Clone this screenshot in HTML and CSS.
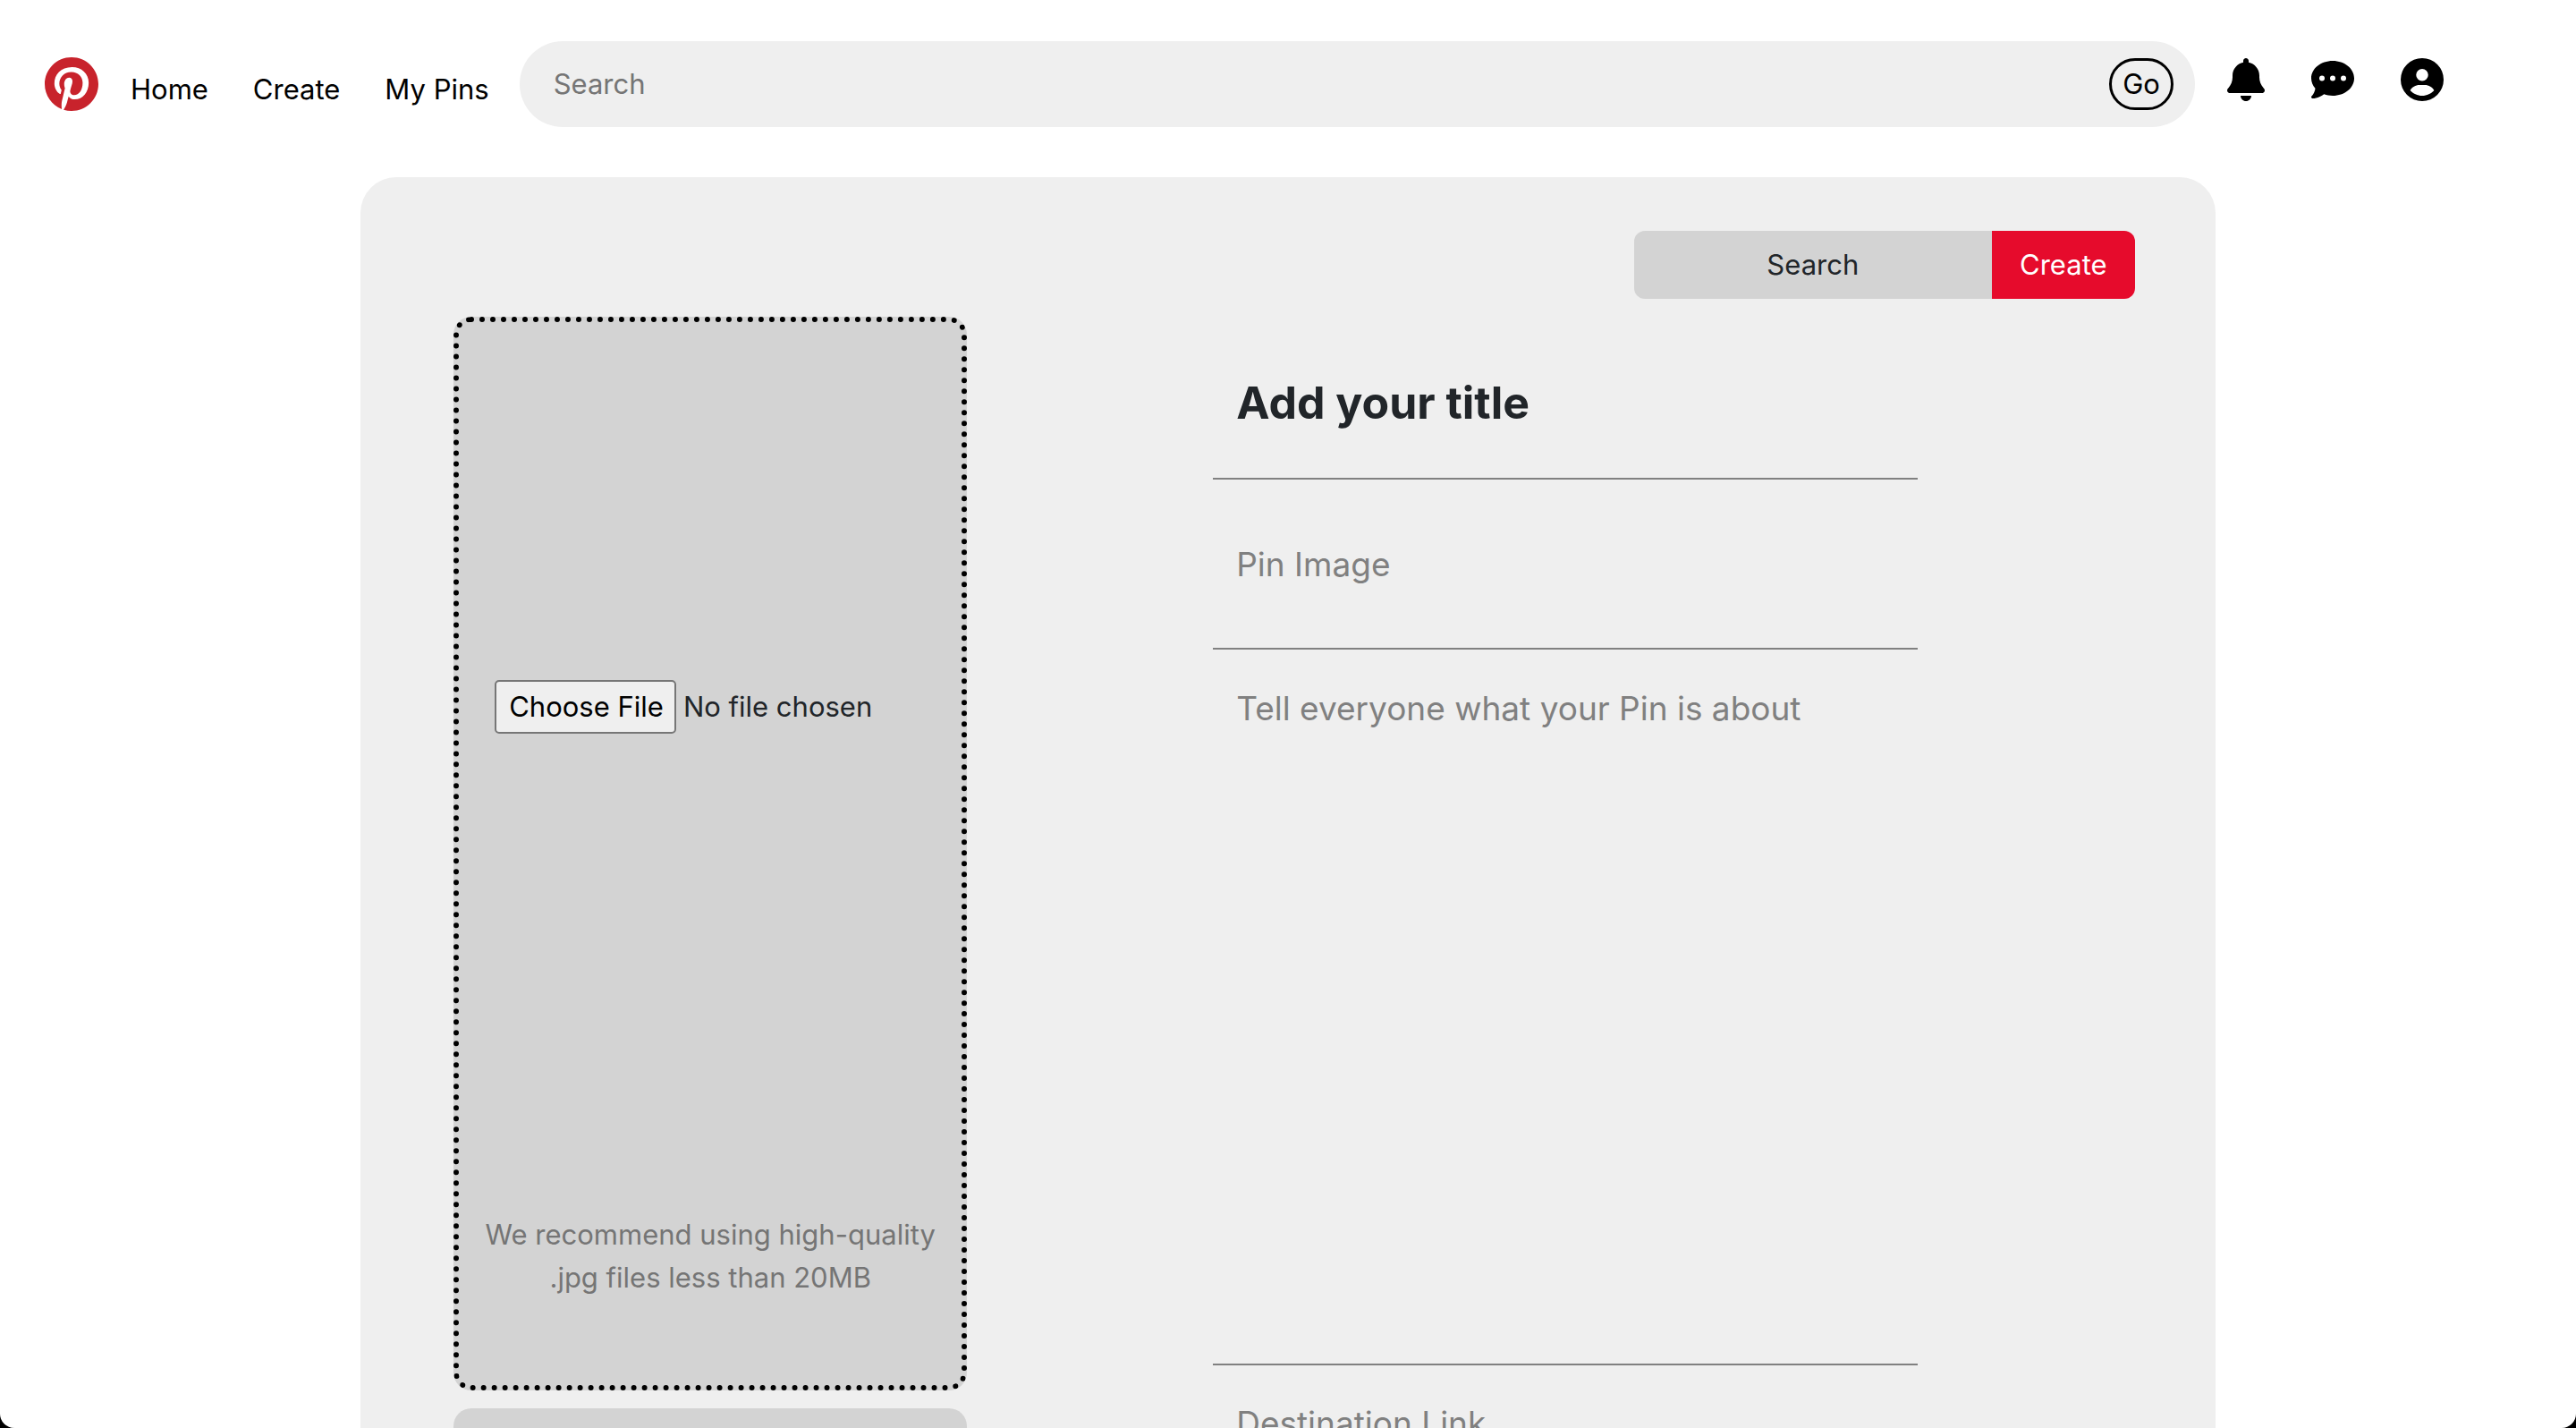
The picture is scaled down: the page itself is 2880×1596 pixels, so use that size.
FILE: index.html
```html
<!DOCTYPE html>
<html lang="en">
<head>
<meta charset="utf-8">
<meta name="viewport" content="width=device-width, initial-scale=1">
<title>Create a Pin</title>
<link rel="stylesheet" href="styles.css">
</head>
<body>
<div class="window">
  <header class="navbar">
    <a class="logo" href="#" aria-label="Pinterest">
      <svg viewBox="0 8 496 496" aria-hidden="true"><path d="M496 256c0 137-111 248-248 248-25.600 0-50.200-3.900-73.400-11.100 10.100-16.500 25.200-43.500 30.800-65 3-11.600 15.400-59 15.400-59 8.100 15.400 31.700 28.500 56.800 28.500 74.800 0 128.700-68.800 128.700-154.300 0-81.900-66.900-143.200-152.900-143.200-107 0-163.900 71.800-163.900 150.100 0 36.400 19.400 81.700 50.300 96.100 4.700 2.200 7.200 1.200 8.300-3.300.8-3.400 5-20.300 6.900-28.100.6-2.500.3-4.700-1.700-7.100-10.100-12.500-18.300-35.300-18.300-56.600 0-54.700 41.400-107.600 112-107.600 60.900 0 103.600 41.500 103.600 100.900 0 67.100-33.900 113.600-78 113.600-24.300 0-42.600-20.100-36.700-44.800 7-29.500 20.500-61.300 20.500-82.600 0-19-10.200-34.900-31.400-34.900-24.900 0-44.900 25.700-44.900 60.200 0 22 7.400 36.800 7.400 36.800s-24.500 103.800-29 123.200c-5 21.400-3 51.600-.9 71.200C65.400 450.900 0 361.100 0 256 0 119 111 8 248 8s248 111 248 248z"/></svg>
    </a>
    <nav class="links">
      <a href="#">Home</a>
      <a href="#">Create</a>
      <a href="#">My Pins</a>
    </nav>
    <form class="search" role="search">
      <input class="search-input" type="text" placeholder="Search" aria-label="Search">
      <button class="go" type="button">Go</button>
    </form>
    <div class="actions">
      <button class="icon" type="button" aria-label="Notifications"><svg viewBox="0 0 448 512" aria-hidden="true"><path d="M224 0c-17.700 0-32 14.300-32 32V51.200C119 66 64 130.600 64 208v18.800c0 47-17.300 92.400-48.500 127.600l-7.400 8.300c-8.400 9.400-10.400 22.900-5.300 34.400S19.400 416 32 416H416c12.600 0 24-7.400 29.200-18.900s3.100-25-5.300-34.400l-7.400-8.300C401.300 319.200 384 273.900 384 226.800V208c0-77.400-55-142-128-156.800V32c0-17.700-14.300-32-32-32zm45.300 493.300c12-12 18.700-28.300 18.700-45.300H224 160c0 17 6.700 33.300 18.700 45.300s28.300 18.700 45.300 18.700s33.300-6.700 45.300-18.700z"/></svg></button>
      <button class="icon" type="button" aria-label="Messages"><svg viewBox="0 0 512 512" aria-hidden="true"><path d="M256 448c141.400 0 256-93.100 256-208S397.400 32 256 32S0 125.100 0 240c0 45.100 17.700 86.800 47.700 120.900c-1.900 24.500-11.400 46.300-21.400 62.900c-5.500 9.200-11.100 16.600-15.200 21.600c-2.100 2.500-3.700 4.400-4.900 5.700c-.6 .6-1 1.100-1.300 1.400l-.3 .3c-4.600 4.600-5.900 11.400-3.400 17.400c2.500 6 8.300 9.900 14.800 9.900c28.700 0 57.600-8.900 81.600-19.300c22.900-10 42.400-21.900 54.300-30.600c31.800 11.500 67 17.900 104.100 17.900zM128 208a32 32 0 1 1 0 64 32 32 0 1 1 0-64zm128 0a32 32 0 1 1 0 64 32 32 0 1 1 0-64zm96 32a32 32 0 1 1 64 0 32 32 0 1 1 -64 0z"/></svg></button>
      <button class="icon" type="button" aria-label="Account"><svg viewBox="0 0 512 512" aria-hidden="true"><path d="M399 384.200C376.900 345.800 335.400 320 288 320H224c-47.400 0-88.900 25.800-111 64.200c35.200 39.200 86.200 63.800 143 63.800s107.800-24.700 143-63.800zM0 256a256 256 0 1 1 512 0A256 256 0 1 1 0 256zm256 16a72 72 0 1 0 0-144 72 72 0 1 0 0 144z"/></svg></button>
    </div>
  </header>

  <main class="card">
    <div class="toolbar">
      <button class="board" type="button">Search</button>
      <button class="create" type="button">Create</button>
    </div>
    <form class="pin-form">
      <div class="media">
        <div class="dropzone">
          <input class="file" type="file" aria-label="Pin image file">
          <p class="hint">We recommend using high-quality .jpg files less than 20MB</p>
        </div>
        <div class="save-site"></div>
      </div>
      <div class="fields">
        <input class="field title" type="text" placeholder="Add your title" aria-label="Title">
        <input class="field image" type="text" placeholder="Pin Image" aria-label="Pin Image">
        <textarea class="field about" placeholder="Tell everyone what your Pin is about" aria-label="Description"></textarea>
        <input class="field link" type="text" placeholder="Destination Link" aria-label="Destination Link">
      </div>
    </form>
  </main>
</div>
</body>
</html>
```
FILE: styles.css
```css
* {
  box-sizing: border-box;
}

html {
  background: #000;
}

body {
  margin: 0;
  color: #212529;
  font-family: Inter, "Liberation Sans", sans-serif;
  font-size: 31px;
  line-height: 48px;
}

button,
input,
textarea {
  margin: 0;
  padding: 0;
  border: 0;
  background: none;
  color: inherit;
  font: inherit;
}

.window {
  height: 100vh;
  overflow-y: auto;
  scrollbar-width: none;
  border-radius: 0 0 16px 16px;
  background: #fff;
}

.navbar {
  display: flex;
  align-items: center;
  padding: 46px 148px 56px 50px;
}

.logo svg {
  display: block;
  width: 60px;
  height: 60px;
  fill: #c8232c;
}

.links {
  display: flex;
  gap: 50px;
  padding: 12px 34px 0 36px;
}

.links a {
  color: #000;
  text-decoration: none;
  white-space: nowrap;
}

.search {
  display: flex;
  flex: 1;
  align-items: center;
  height: 96px;
  padding: 0 24px 0 38px;
  border-radius: 48px;
  background: #efefef;
}

.search-input {
  flex: 1;
  min-width: 0;
}

.search-input::placeholder {
  color: #757575;
  opacity: 1;
}

.go {
  width: 72px;
  height: 58px;
  border: 3px solid #000;
  border-radius: 29px;
  color: #000;
}

.actions {
  display: flex;
  gap: 52px;
  padding: 0 0 10px 36px;
}

.icon svg {
  display: block;
  height: 48px;
  fill: #000;
}

.card {
  width: 72%;
  margin: 0 auto;
  padding: 60px 90px 60px 104px;
  border-radius: 40px;
  background: #efefef;
}

.toolbar {
  display: flex;
  justify-content: flex-end;
}

.board,
.create {
  height: 76px;
}

.board {
  width: 400px;
  border-radius: 12px 0 0 12px;
  background: #d3d3d3;
}

.create {
  width: 160px;
  border-radius: 0 12px 12px 0;
  background: #e60b2c;
  color: #fff;
}

.pin-form {
  display: flex;
  gap: 275px;
  padding-top: 20px;
}

.media {
  display: flex;
  flex-direction: column;
  gap: 20px;
  width: 574px;
}

.dropzone {
  display: flex;
  flex-direction: column;
  justify-content: space-between;
  height: 1200px;
  padding: 400px 16px 96px;
  border: 6px dotted #000;
  border-radius: 20px;
  background: #d3d3d3;
}

.file {
  width: 100%;
  padding-left: 24px;
}

.file::file-selector-button {
  height: 60px;
  margin: 0 8px 0 0;
  padding: 0 12px 0 14px;
  border: 2px solid #767676;
  border-radius: 5px;
  background: #efefef;
  color: #000;
  font: inherit;
}

.hint {
  margin: 0;
  color: #757575;
  text-align: center;
}

.save-site {
  height: 96px;
  border-radius: 20px;
  background: #d3d3d3;
}

.fields {
  display: flex;
  flex-direction: column;
  width: 788px;
}

.field {
  display: block;
  width: 100%;
  padding: 0 26px;
  border-bottom: 2px solid #808080;
  font-size: 37px;
  line-height: 60px;
  resize: none;
}

.field::placeholder {
  color: #808080;
  opacity: 1;
}

.title {
  height: 182px;
  padding-top: 12px;
  font-size: 50px;
  font-weight: 700;
}

.title::placeholder {
  color: #212529;
}

.image {
  height: 190px;
}

.about {
  height: 800px;
  padding-top: 36px;
}

.link {
  height: 130px;
}
```
